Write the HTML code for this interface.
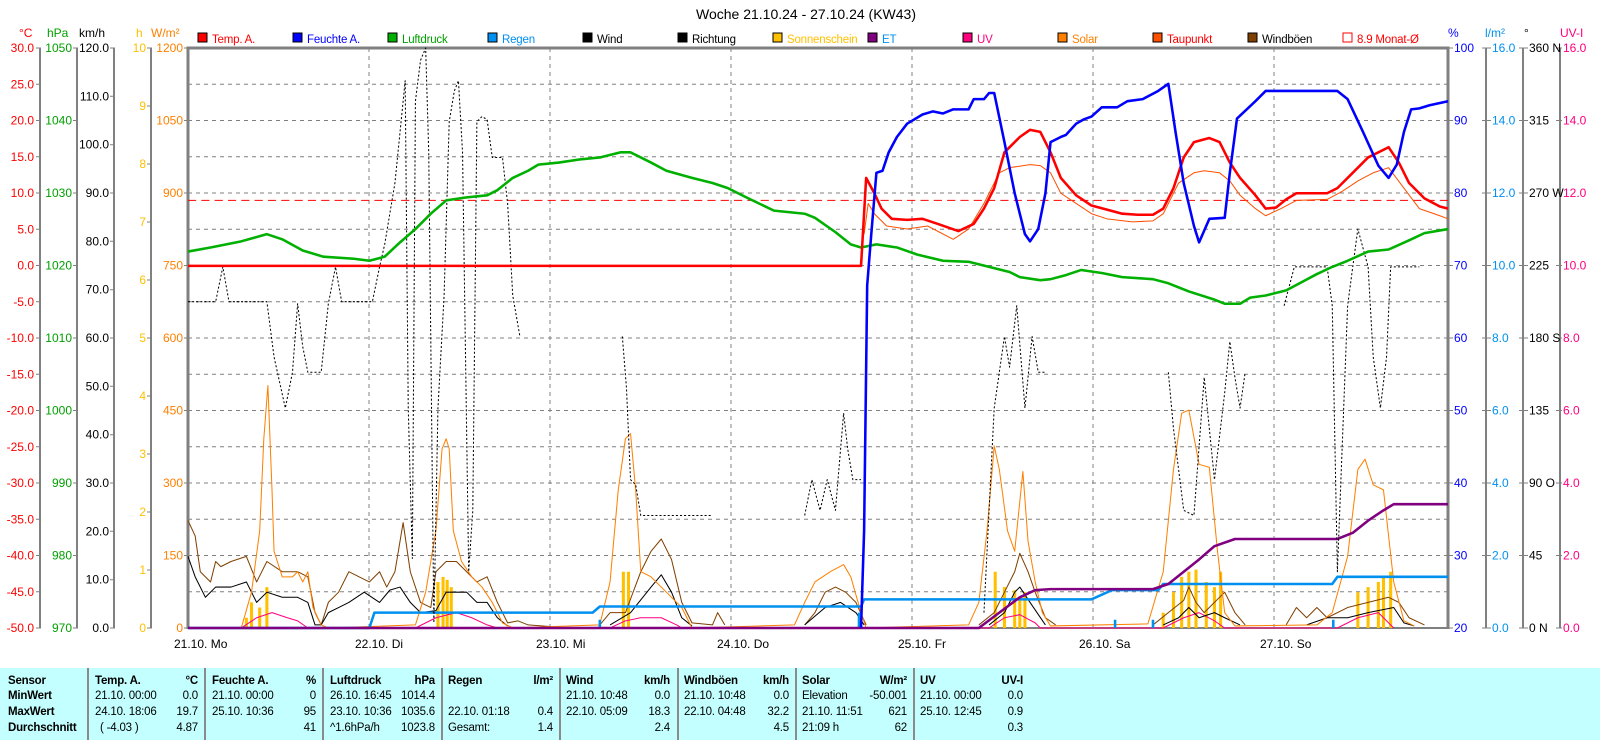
<!DOCTYPE html>
<html><head><meta charset="utf-8"><style>
html,body{margin:0;padding:0;background:#fff;width:1600px;height:740px;overflow:hidden}
svg{display:block;font-family:"Liberation Sans",sans-serif}
#tbl{position:absolute;left:0;top:668px;width:1600px;height:72px;background:#c4ffff;font:11.5px "Liberation Sans",sans-serif;color:#000;letter-spacing:-0.2px}
#tbl .sep{position:absolute;top:0;width:2px;height:72px;background:#8a8a8a}
#tbl div.r{position:absolute;white-space:nowrap}
b{font-weight:bold}
</style></head><body>
<svg width="1600" height="668" viewBox="0 0 1600 668">
<text x="806" y="19" font-size="14" text-anchor="middle">Woche 21.10.24 - 27.10.24 (KW43)</text>
<!-- legend -->
<g font-size="11.5" letter-spacing="-0.2">
<rect x="198" y="33" width="9" height="9" fill="#ff0000" stroke="#000"/><text x="212" y="43" fill="#ff0000">Temp. A.</text>
<rect x="293" y="33" width="9" height="9" fill="#0000ff" stroke="#000"/><text x="307" y="43" fill="#0000ff">Feuchte A.</text>
<rect x="388" y="33" width="9" height="9" fill="#00b000" stroke="#000"/><text x="402" y="43" fill="#00a000">Luftdruck</text>
<rect x="488" y="33" width="9" height="9" fill="#0090f0" stroke="#000"/><text x="502" y="43" fill="#0090f0">Regen</text>
<rect x="583" y="33" width="9" height="9" fill="#000" stroke="#000"/><text x="597" y="43">Wind</text>
<rect x="678" y="33" width="9" height="9" fill="#000" stroke="#000"/><text x="692" y="43">Richtung</text>
<rect x="773" y="33" width="9" height="9" fill="#ffc000" stroke="#000"/><text x="787" y="43" fill="#ffc000">Sonnenschein</text>
<rect x="868" y="33" width="9" height="9" fill="#800080" stroke="#000"/><text x="882" y="43" fill="#0090f0">ET</text>
<rect x="963" y="33" width="9" height="9" fill="#ff0080" stroke="#000"/><text x="977" y="43" fill="#ff0080">UV</text>
<rect x="1058" y="33" width="9" height="9" fill="#ff8000" stroke="#000"/><text x="1072" y="43" fill="#ff8000">Solar</text>
<rect x="1153" y="33" width="9" height="9" fill="#ff5000" stroke="#000"/><text x="1167" y="43" fill="#ff0000">Taupunkt</text>
<rect x="1248" y="33" width="9" height="9" fill="#804000" stroke="#000"/><text x="1262" y="43">Windböen</text>
<rect x="1343" y="33" width="9" height="9" fill="#fff" stroke="#ff0000"/><text x="1357" y="43" fill="#ff0000">8.9 Monat-Ø</text>
</g>
<!-- axis headers -->
<g font-size="12">
<text x="19" y="37" fill="#ff0000">°C</text>
<text x="47" y="37" fill="#00a000">hPa</text>
<text x="79" y="37">km/h</text>
<text x="136" y="37" fill="#ffc000">h</text>
<text x="151" y="37" fill="#ff8000">W/m²</text>
<text x="1448" y="37" fill="#0000ff">%</text>
<text x="1485" y="37" fill="#0090f0">l/m²</text>
<text x="1524" y="37">°</text>
<text x="1560" y="37" fill="#ff0080">UV-I</text>
</g>
<!-- grid -->
<g stroke="#808080" stroke-width="1" stroke-dasharray="4,4">
<line x1="188" x2="1448" y1="84.25" y2="84.25"/><line x1="188" x2="1448" y1="120.5" y2="120.5"/><line x1="188" x2="1448" y1="156.75" y2="156.75"/><line x1="188" x2="1448" y1="193" y2="193"/><line x1="188" x2="1448" y1="229.25" y2="229.25"/><line x1="188" x2="1448" y1="265.5" y2="265.5"/><line x1="188" x2="1448" y1="301.75" y2="301.75"/><line x1="188" x2="1448" y1="338" y2="338"/><line x1="188" x2="1448" y1="374.25" y2="374.25"/><line x1="188" x2="1448" y1="410.5" y2="410.5"/><line x1="188" x2="1448" y1="446.75" y2="446.75"/><line x1="188" x2="1448" y1="483" y2="483"/><line x1="188" x2="1448" y1="519.25" y2="519.25"/><line x1="188" x2="1448" y1="555.5" y2="555.5"/><line x1="188" x2="1448" y1="591.75" y2="591.75"/>
<line x1="369" x2="369" y1="48" y2="628"/><line x1="550" x2="550" y1="48" y2="628"/><line x1="731" x2="731" y1="48" y2="628"/><line x1="912" x2="912" y1="48" y2="628"/><line x1="1093" x2="1093" y1="48" y2="628"/><line x1="1274" x2="1274" y1="48" y2="628"/>
</g>
<!-- axes lines -->
<g stroke="#808080" stroke-width="2" fill="none">
<line x1="40" y1="48" x2="40" y2="628"/><line x1="77" y1="48" x2="77" y2="628"/><line x1="114" y1="48" x2="114" y2="628"/><line x1="151" y1="48" x2="151" y2="628"/>
<line x1="1486" y1="48" x2="1486" y2="628"/><line x1="1523" y1="48" x2="1523" y2="628"/><line x1="1560" y1="48" x2="1560" y2="628"/>
<path d="M188 629V48H1448V629" stroke-width="3"/>
<line x1="188" y1="628" x2="1448" y2="628" stroke-width="2"/>
</g>
<!-- ticks -->
<g stroke="#808080" stroke-width="1">
<path d="M36 48h5M36 84.25h5M36 120.5h5M36 156.75h5M36 193h5M36 229.25h5M36 265.5h5M36 301.75h5M36 338h5M36 374.25h5M36 410.5h5M36 446.75h5M36 483h5M36 519.25h5M36 555.5h5M36 591.75h5M36 628h5"/>
<path d="M73 48h5M73 120.5h5M73 193h5M73 265.5h5M73 338h5M73 410.5h5M73 483h5M73 555.5h5M73 628h5"/>
<path d="M110 48h5M110 96.3h5M110 144.7h5M110 193h5M110 241.3h5M110 289.7h5M110 338h5M110 386.3h5M110 434.7h5M110 483h5M110 531.3h5M110 579.7h5M110 628h5"/>
<path d="M147 48h5M147 106h5M147 164h5M147 222h5M147 280h5M147 338h5M147 396h5M147 454h5M147 512h5M147 570h5M147 628h5"/>
<path d="M184 48h4M184 120.5h4M184 193h4M184 265.5h4M184 338h4M184 410.5h4M184 483h4M184 555.5h4M184 628h4"/>
<path d="M1448 48h5M1448 120.5h5M1448 193h5M1448 265.5h5M1448 338h5M1448 410.5h5M1448 483h5M1448 555.5h5M1448 628h5"/>
<path d="M1482 48h9M1482 120.5h9M1482 193h9M1482 265.5h9M1482 338h9M1482 410.5h9M1482 483h9M1482 555.5h9M1482 628h9"/>
<path d="M1519 48h9M1519 120.5h9M1519 193h9M1519 265.5h9M1519 338h9M1519 410.5h9M1519 483h9M1519 555.5h9M1519 628h9"/>
<path d="M1556 48h6M1556 120.5h6M1556 193h6M1556 265.5h6M1556 338h6M1556 410.5h6M1556 483h6M1556 555.5h6M1556 628h6"/>
</g>
<!-- axis labels -->
<g font-size="12" text-anchor="end" fill="#ff0000">
<text x="34" y="52">30.0</text><text x="34" y="88.25">25.0</text><text x="34" y="124.5">20.0</text><text x="34" y="160.75">15.0</text><text x="34" y="197">10.0</text><text x="34" y="233.25">5.0</text><text x="34" y="269.5">0.0</text><text x="34" y="305.75">-5.0</text><text x="34" y="342">-10.0</text><text x="34" y="378.25">-15.0</text><text x="34" y="414.5">-20.0</text><text x="34" y="450.75">-25.0</text><text x="34" y="487">-30.0</text><text x="34" y="523.25">-35.0</text><text x="34" y="559.5">-40.0</text><text x="34" y="595.75">-45.0</text><text x="34" y="632">-50.0</text>
</g>
<g font-size="12" text-anchor="end" fill="#00a000">
<text x="72" y="52">1050</text><text x="72" y="124.5">1040</text><text x="72" y="197">1030</text><text x="72" y="269.5">1020</text><text x="72" y="342">1010</text><text x="72" y="414.5">1000</text><text x="72" y="487">990</text><text x="72" y="559.5">980</text><text x="72" y="632">970</text>
</g>
<g font-size="12" text-anchor="end" fill="#000">
<text x="109" y="52">120.0</text><text x="109" y="100.3">110.0</text><text x="109" y="148.7">100.0</text><text x="109" y="197">90.0</text><text x="109" y="245.3">80.0</text><text x="109" y="293.7">70.0</text><text x="109" y="342">60.0</text><text x="109" y="390.3">50.0</text><text x="109" y="438.7">40.0</text><text x="109" y="487">30.0</text><text x="109" y="535.3">20.0</text><text x="109" y="583.7">10.0</text><text x="109" y="632">0.0</text>
</g>
<g font-size="12" text-anchor="end" fill="#ffc000">
<text x="146" y="52">10</text><text x="146" y="110">9</text><text x="146" y="168">8</text><text x="146" y="226">7</text><text x="146" y="284">6</text><text x="146" y="342">5</text><text x="146" y="400">4</text><text x="146" y="458">3</text><text x="146" y="516">2</text><text x="146" y="574">1</text><text x="146" y="632">0</text>
</g>
<g font-size="12" text-anchor="end" fill="#ff8000">
<text x="183" y="52">1200</text><text x="183" y="124.5">1050</text><text x="183" y="197">900</text><text x="183" y="269.5">750</text><text x="183" y="342">600</text><text x="183" y="414.5">450</text><text x="183" y="487">300</text><text x="183" y="559.5">150</text><text x="183" y="632">0</text>
</g>
<g font-size="12" fill="#0000ff">
<text x="1454" y="52">100</text><text x="1454" y="124.5">90</text><text x="1454" y="197">80</text><text x="1454" y="269.5">70</text><text x="1454" y="342">60</text><text x="1454" y="414.5">50</text><text x="1454" y="487">40</text><text x="1454" y="559.5">30</text><text x="1454" y="632">20</text>
</g>
<g font-size="12" fill="#0090f0">
<text x="1492" y="52">16.0</text><text x="1492" y="124.5">14.0</text><text x="1492" y="197">12.0</text><text x="1492" y="269.5">10.0</text><text x="1492" y="342">8.0</text><text x="1492" y="414.5">6.0</text><text x="1492" y="487">4.0</text><text x="1492" y="559.5">2.0</text><text x="1492" y="632">0.0</text>
</g>
<g font-size="12" fill="#000">
<text x="1529" y="52">360 N</text><text x="1529" y="124.5">315</text><text x="1529" y="197">270 W</text><text x="1529" y="269.5">225</text><text x="1529" y="342">180 S</text><text x="1529" y="414.5">135</text><text x="1529" y="487">90 O</text><text x="1529" y="559.5">45</text><text x="1529" y="632">0 N</text>
</g>
<g font-size="12" fill="#ff0080">
<text x="1563" y="52">16.0</text><text x="1563" y="124.5">14.0</text><text x="1563" y="197">12.0</text><text x="1563" y="269.5">10.0</text><text x="1563" y="342">8.0</text><text x="1563" y="414.5">6.0</text><text x="1563" y="487">4.0</text><text x="1563" y="559.5">2.0</text><text x="1563" y="632">0.0</text>
</g>
<!-- x labels -->
<g font-size="12" fill="#000">
<text x="174" y="648">21.10.  Mo</text><text x="355" y="648">22.10.  Di</text><text x="536" y="648">23.10.  Mi</text><text x="717" y="648">24.10.  Do</text><text x="898" y="648">25.10.  Fr</text><text x="1079" y="648">26.10.  Sa</text><text x="1260" y="648">27.10.  So</text>
</g>
<!-- data -->
<g transform="translate(188,48) scale(1.0244,1.0229) translate(-188,-48)" fill="none" stroke-linejoin="round">
<line x1="188" y1="197" x2="1418" y2="197" stroke="#ff0000" stroke-dasharray="8,5"/>
<g stroke="#ffc000" stroke-width="3">
<path d="M245 615V605M250 615V590M258 615V595M265 615V575M432 615V570M437 615V565M441 615V568M445 615V575M613 615V560M618 615V560M976 615V560M985 615V575M995 615V578M1000 615V585M1005 615V580M1140 615V600M1150 615V580M1158 615V565M1165 615V560M1172 615V558M1182 615V570M1190 615V575M1196 615V560M1330 615V580M1340 615V575M1350 615V570M1355 615V565M1362 615V560"/>
</g>
<polyline stroke="#ff0080" points="240,615 255,605 270,600 285,605 295,608 305,615 410,615 430,605 450,600 465,605 480,612 490,615 600,615 615,608 630,605 650,605 665,612 670,615 970,615 985,605 1000,602 1015,610 1020,615 1140,615 1160,605 1175,600 1190,608 1200,615 1310,615 1330,605 1350,600 1360,610 1365,615"/>
<polyline stroke="#804000" points="188,510 195,525 200,560 210,570 215,550 220,555 230,550 245,545 255,570 265,550 280,560 295,560 305,565 312,600 318,612 325,590 335,580 345,560 355,565 365,570 375,560 382,575 390,560 398,512 405,560 415,590 425,595 430,560 440,550 450,550 460,560 470,570 480,565 490,590 500,610 510,608 520,612 560,615"/>
<polyline stroke="#804000" points="590,612 600,600 615,600 630,560 640,540 650,528 660,548 670,590 680,610 700,612 705,600 712,612"/>
<polyline stroke="#804000" points="790,612 800,600 810,580 820,575 830,580 840,590 850,612"/>
<polyline stroke="#804000" points="960,612 975,600 985,580 995,560 1000,542 1008,560 1015,580 1025,605 1035,612"/>
<polyline stroke="#804000" points="1130,612 1145,600 1160,588 1165,575 1172,590 1180,600 1190,590 1200,580 1210,600 1220,612"/>
<polyline stroke="#804000" points="1260,612 1270,595 1280,605 1290,595 1300,605 1320,595 1340,590 1360,585 1370,590 1380,605 1395,612"/>
<polyline stroke="#000" points="188,545 195,565 205,585 215,575 230,575 245,570 255,590 265,580 280,585 295,585 305,590 312,612 318,612 325,600 335,595 345,590 360,580 375,590 385,578 395,575 405,590 415,600 430,598 440,580 460,580 470,590 480,590 490,605 500,613"/>
<polyline stroke="#000" points="600,612 620,600 640,575 650,563 660,580 670,605 680,613"/>
<polyline stroke="#000" points="790,612 810,595 825,590 840,600 848,612"/>
<polyline stroke="#000" points="970,612 985,600 995,580 1000,575 1010,590 1025,612"/>
<polyline stroke="#000" points="1140,612 1155,605 1165,595 1175,605 1190,600 1200,605 1215,612"/>
<polyline stroke="#000" points="1280,612 1300,605 1320,605 1340,600 1365,595 1375,610 1385,613"/>
<polyline stroke="#ff8000" points="188,615 240,615 250,580 258,520 262,430 266,378 270,480 272,540 280,565 290,565 295,560 300,570 305,560 310,595 318,612 325,615 410,612 420,580 430,520 436,440 440,430 443,440 447,520 455,550 465,565 475,575 485,590 495,610 505,615 590,612 600,570 608,480 615,430 620,425 625,480 630,560 640,565 655,580 670,595 680,615 780,612 790,590 800,570 815,560 828,553 835,565 845,600 850,615 950,612 960,590 968,520 975,437 980,460 988,520 995,540 1003,462 1008,530 1015,570 1022,600 1030,613 1125,611 1140,560 1150,460 1158,405 1165,402 1175,455 1185,458 1193,540 1200,600 1210,613 1290,612 1305,600 1320,545 1330,460 1337,450 1345,475 1355,480 1365,570 1375,608 1385,613"/>
<polyline stroke="#0090f0" stroke-width="2.5" points="188,615 365,615 370,600 583,600 590,594 845,594 848,587 1070,587 1090,578 1135,578 1140,572 1305,572 1310,565 1418,565"/>
<path stroke="#0090f0" stroke-width="2.5" d="M590 615V607M843 615V600M1093 615V607M1130 615V607M1306 615V607"/>
<polyline stroke="#800080" stroke-width="2.5" points="188,615 960,615 980,600 1000,585 1015,578 1030,577 1130,577 1145,572 1160,560 1175,548 1190,535 1210,528 1310,528 1325,522 1340,510 1355,500 1365,494 1418,494"/>
<g stroke="#000" stroke-dasharray="2,2">
<polyline points="188,296 215,296 222,262 228,296 265,296 272,350 283,400 290,365 295,298 300,340 305,365 318,365 325,298 332,262 338,296 368,296 375,262 380,240 390,180 400,80 403,400 407,547 410,100 415,60 420,48 423,150 428,610 432,400 438,290 443,120 448,90 452,80 456,150 462,560 466,500 470,120 475,115 480,118 485,155 495,155 500,200 505,290 512,330"/>
<polyline points="612,330 616,380 620,470 625,475 630,505 700,505"/>
<polyline points="790,505 797,470 805,500 812,470 820,500 828,405 832,440 837,470 845,470"/>
<polyline points="965,600 975,400 985,330 990,360 997,300 1005,400 1012,330 1018,365 1025,365"/>
<polyline points="1145,365 1150,420 1160,500 1170,505 1180,370 1190,470 1200,385 1205,335 1210,370 1215,400 1220,365"/>
<polyline points="1258,300 1268,262 1300,262 1305,300 1310,560 1320,300 1325,262 1330,225 1340,262 1345,350 1352,400 1358,350 1362,262 1390,262"/>
</g>
<polyline stroke="#00b000" stroke-width="2.5" points="188,247 210,243 240,237 265,230 280,235 300,246 320,252 350,254 365,256 380,252 395,238 410,225 425,210 440,197 460,194 480,192 490,187 505,175 520,168 530,162 550,160 570,157 590,155 610,150 620,150 640,160 655,168 680,175 700,180 715,185 735,195 760,207 790,210 800,214 820,228 835,240 845,243 860,240 880,243 900,250 925,256 950,257 970,262 990,267 1000,272 1020,275 1030,274 1045,270 1060,265 1080,268 1100,272 1130,274 1145,278 1165,286 1190,294 1200,298 1215,298 1225,292 1240,290 1260,285 1275,277 1290,269 1305,262 1320,256 1340,247 1360,245 1380,236 1395,229 1418,225"/>
<polyline stroke="#ff5000" points="848,230 852,200 858,210 870,222 890,225 910,222 935,235 950,225 965,200 980,170 990,165 1010,162 1020,163 1030,170 1040,190 1055,200 1070,210 1085,215 1110,218 1130,217 1140,210 1155,180 1170,170 1180,168 1195,170 1205,178 1215,192 1230,205 1240,212 1255,205 1270,197 1300,196 1315,188 1330,178 1345,170 1360,165 1375,185 1390,205 1410,212 1418,215"/>
<polyline stroke="#ff0000" stroke-width="2.5" points="188,261 845,261 850,175 858,190 865,205 875,215 890,216 905,215 920,220 940,227 955,220 965,205 975,185 985,150 1000,135 1010,128 1020,130 1030,150 1040,175 1055,192 1070,202 1085,206 1100,210 1115,211 1130,211 1140,205 1150,185 1160,155 1170,140 1185,136 1195,140 1205,160 1215,175 1230,192 1240,205 1250,204 1260,196 1270,190 1300,190 1310,185 1325,170 1340,155 1360,145 1370,160 1380,180 1395,195 1410,203 1418,205"/>
<polyline stroke="#0000ff" stroke-width="2.5" points="845,615 848,520 851,280 855,230 860,170 866,168 872,150 880,135 890,122 905,113 915,110 925,112 935,108 950,108 955,98 965,98 970,92 975,92 985,140 995,190 1005,230 1010,237 1018,225 1025,190 1030,140 1040,135 1045,133 1055,122 1062,118 1070,115 1080,106 1095,106 1105,100 1120,98 1135,90 1145,83 1152,130 1160,180 1170,222 1175,238 1185,215 1200,214 1205,170 1212,117 1230,100 1240,90 1260,90 1310,90 1320,98 1335,130 1350,163 1360,175 1368,162 1375,130 1382,108 1390,107 1400,104 1418,100"/>
</g>
</svg>
<div id="tbl">
<div class="sep" style="left:87px"></div><div class="sep" style="left:204px"></div><div class="sep" style="left:322px"></div><div class="sep" style="left:441px"></div><div class="sep" style="left:559px"></div><div class="sep" style="left:677px"></div><div class="sep" style="left:795px"></div><div class="sep" style="left:913px"></div>
<div class="r" style="left:8px;top:7px"><b>Sensor</b></div>
<div class="r" style="left:8px;top:22px"><b>MinWert</b></div>
<div class="r" style="left:8px;top:38px"><b>MaxWert</b></div>
<div class="r" style="left:8px;top:54px"><b>Durchschnitt</b></div>

<div class="r" style="left:95px;top:7px"><b>Temp. A.</b></div><div class="r" style="right:1402px;top:7px"><b>°C</b></div>
<div class="r" style="left:95px;top:22px">21.10. 00:00</div><div class="r" style="right:1402px;top:22px">0.0</div>
<div class="r" style="left:95px;top:38px">24.10. 18:06</div><div class="r" style="right:1402px;top:38px">19.7</div>
<div class="r" style="left:100px;top:54px">( -4.03 )</div><div class="r" style="right:1402px;top:54px">4.87</div>

<div class="r" style="left:212px;top:7px"><b>Feuchte A.</b></div><div class="r" style="right:1284px;top:7px"><b>%</b></div>
<div class="r" style="left:212px;top:22px">21.10. 00:00</div><div class="r" style="right:1284px;top:22px">0</div>
<div class="r" style="left:212px;top:38px">25.10. 10:36</div><div class="r" style="right:1284px;top:38px">95</div>
<div class="r" style="right:1284px;top:54px">41</div>

<div class="r" style="left:330px;top:7px"><b>Luftdruck</b></div><div class="r" style="right:1165px;top:7px"><b>hPa</b></div>
<div class="r" style="left:330px;top:22px">26.10. 16:45</div><div class="r" style="right:1165px;top:22px">1014.4</div>
<div class="r" style="left:330px;top:38px">23.10. 10:36</div><div class="r" style="right:1165px;top:38px">1035.6</div>
<div class="r" style="left:330px;top:54px">^1.6hPa/h</div><div class="r" style="right:1165px;top:54px">1023.8</div>

<div class="r" style="left:448px;top:7px"><b>Regen</b></div><div class="r" style="right:1047px;top:7px"><b>l/m²</b></div>
<div class="r" style="left:448px;top:38px">22.10. 01:18</div><div class="r" style="right:1047px;top:38px">0.4</div>
<div class="r" style="left:448px;top:54px">Gesamt:</div><div class="r" style="right:1047px;top:54px">1.4</div>

<div class="r" style="left:566px;top:7px"><b>Wind</b></div><div class="r" style="right:930px;top:7px"><b>km/h</b></div>
<div class="r" style="left:566px;top:22px">21.10. 10:48</div><div class="r" style="right:930px;top:22px">0.0</div>
<div class="r" style="left:566px;top:38px">22.10. 05:09</div><div class="r" style="right:930px;top:38px">18.3</div>
<div class="r" style="right:930px;top:54px">2.4</div>

<div class="r" style="left:684px;top:7px"><b>Windböen</b></div><div class="r" style="right:811px;top:7px"><b>km/h</b></div>
<div class="r" style="left:684px;top:22px">21.10. 10:48</div><div class="r" style="right:811px;top:22px">0.0</div>
<div class="r" style="left:684px;top:38px">22.10. 04:48</div><div class="r" style="right:811px;top:38px">32.2</div>
<div class="r" style="right:811px;top:54px">4.5</div>

<div class="r" style="left:802px;top:7px"><b>Solar</b></div><div class="r" style="right:693px;top:7px"><b>W/m²</b></div>
<div class="r" style="left:802px;top:22px">Elevation</div><div class="r" style="right:693px;top:22px">-50.001</div>
<div class="r" style="left:802px;top:38px">21.10. 11:51</div><div class="r" style="right:693px;top:38px">621</div>
<div class="r" style="left:802px;top:54px">21:09 h</div><div class="r" style="right:693px;top:54px">62</div>

<div class="r" style="left:920px;top:7px"><b>UV</b></div><div class="r" style="right:577px;top:7px"><b>UV-I</b></div>
<div class="r" style="left:920px;top:22px">21.10. 00:00</div><div class="r" style="right:577px;top:22px">0.0</div>
<div class="r" style="left:920px;top:38px">25.10. 12:45</div><div class="r" style="right:577px;top:38px">0.9</div>
<div class="r" style="right:577px;top:54px">0.3</div>
</div>
</body></html>
